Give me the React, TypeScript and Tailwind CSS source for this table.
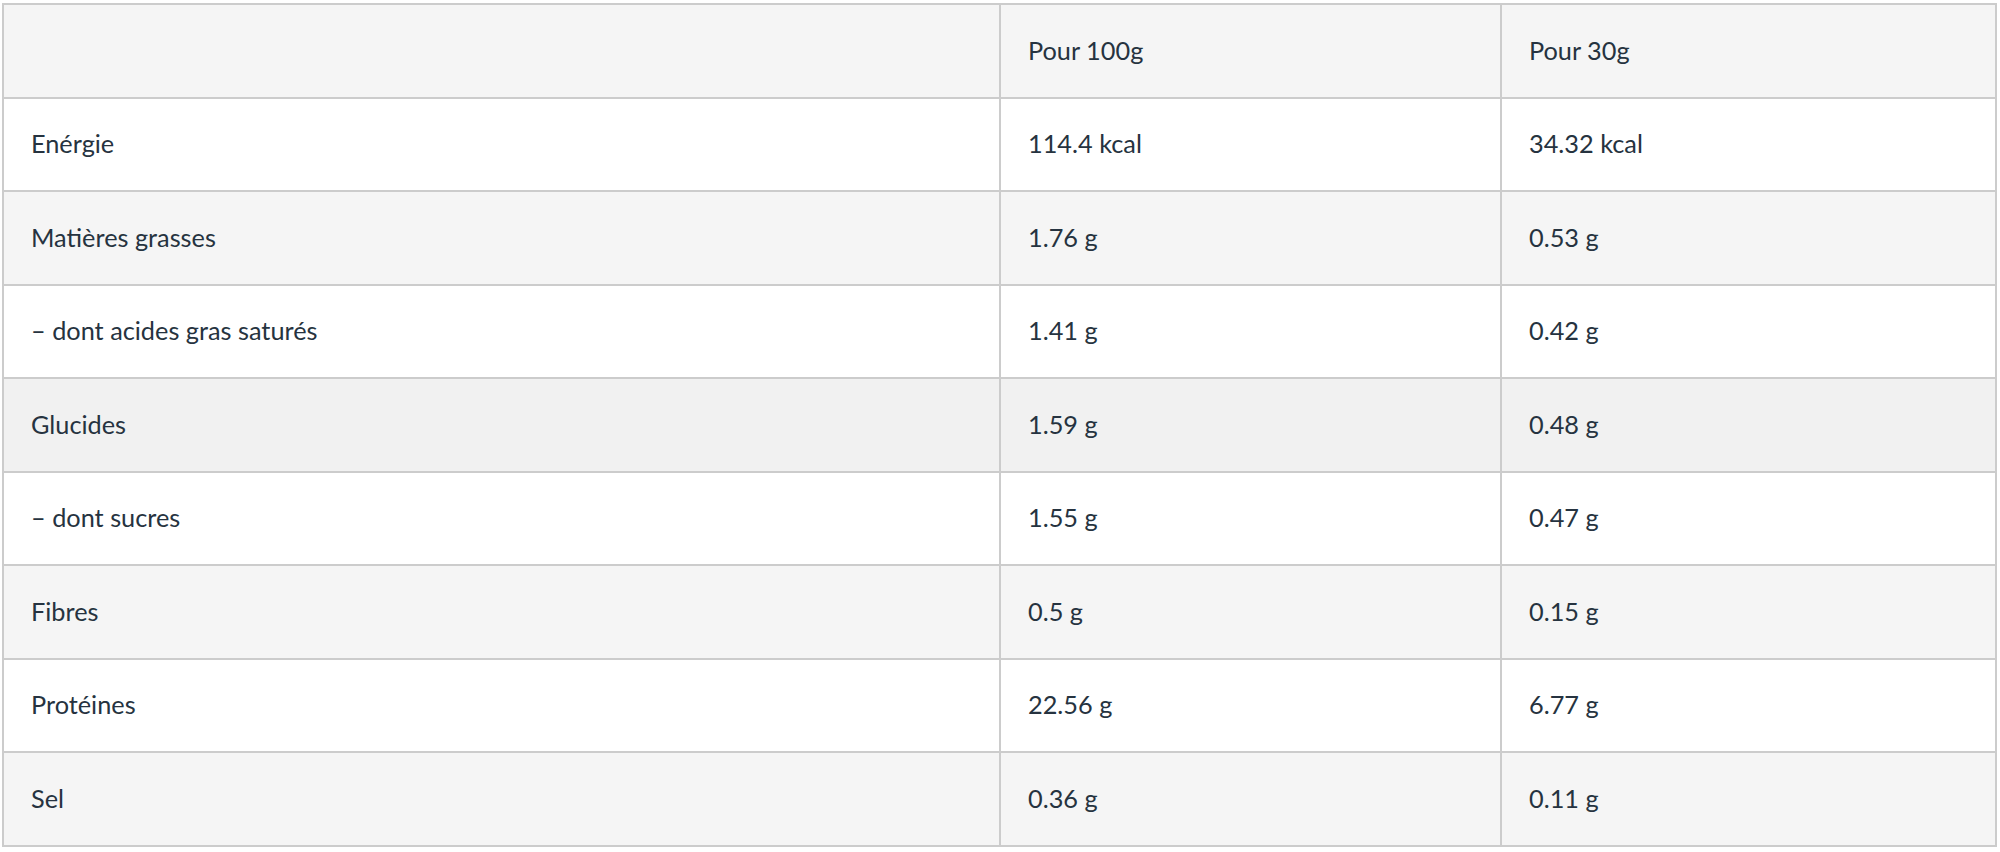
import React from "react";

const rows: { label: string; a: string; b: string; bg: string }[] = [
  { label: "Enérgie", a: "114.4 kcal", b: "34.32 kcal", bg: "bg-white" },
  { label: "Matières grasses", a: "1.76 g", b: "0.53 g", bg: "bg-[#f5f5f5]" },
  { label: "– dont acides gras saturés", a: "1.41 g", b: "0.42 g", bg: "bg-white" },
  { label: "Glucides", a: "1.59 g", b: "0.48 g", bg: "bg-[#f1f1f1]" },
  { label: "– dont sucres", a: "1.55 g", b: "0.47 g", bg: "bg-white" },
  { label: "Fibres", a: "0.5 g", b: "0.15 g", bg: "bg-[#f5f5f5]" },
  { label: "Protéines", a: "22.56 g", b: "6.77 g", bg: "bg-white" },
  { label: "Sel", a: "0.36 g", b: "0.11 g", bg: "bg-[#f5f5f5]" },
];

const cell =
  "border-2 border-[#cccccc] px-[27px] align-middle text-left font-normal";

export default function App() {
  return (
    <div
      className="w-[2000px] h-[852px] bg-white pt-[3px] pl-[2px] pr-[3px] text-[25.3px] text-[#263340]"
      style={{ fontFamily: "Lato, 'Open Sans', sans-serif" }}
    >
      <table className="w-full border-collapse table-fixed">
        <colgroup>
          <col className="w-[997px]" />
          <col className="w-[501px]" />
          <col />
        </colgroup>
        <thead>
          <tr className="h-[93.5px] bg-[#f5f5f5]">
            <th className={cell}></th>
            <th className={cell}>Pour 100g</th>
            <th className={cell}>Pour 30g</th>
          </tr>
        </thead>
        <tbody>
          {rows.map((r) => (
            <tr key={r.label} className={`h-[93.5px] ${r.bg}`}>
              <td className={cell}>{r.label}</td>
              <td className={cell}>{r.a}</td>
              <td className={cell}>{r.b}</td>
            </tr>
          ))}
        </tbody>
      </table>
    </div>
  );
}
